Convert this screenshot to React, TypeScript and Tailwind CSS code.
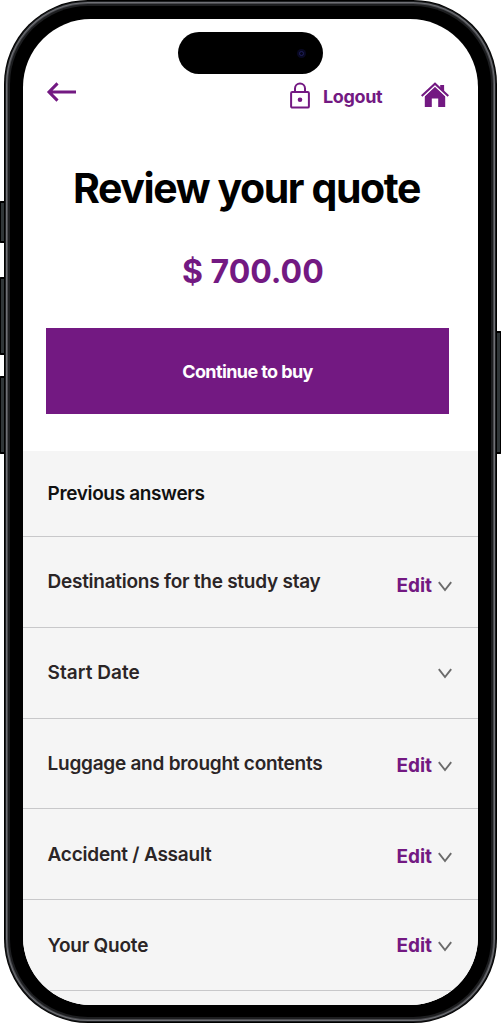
type Answer = {
  label: string;
  editable: boolean;
  labelStyle: string;
  actionStyle: string;
};

const answers: Answer[] = [
  { label: "Destinations for the study stay", editable: true, labelStyle: "pt-[32px] tracking-[-0.25px]", actionStyle: "pt-[36px]" },
  { label: "Start Date", editable: false, labelStyle: "pt-[32px] tracking-[0.05px]", actionStyle: "pt-[32px]" },
  { label: "Luggage and brought contents", editable: true, labelStyle: "pt-[32px] tracking-[-0.25px]", actionStyle: "pt-[34.6px]" },
  { label: "Accident / Assault", editable: true, labelStyle: "pt-[33px] tracking-[-0.22px]", actionStyle: "pt-[35px]" },
  { label: "Your Quote", editable: true, labelStyle: "pt-[33px] tracking-[-0.22px]", actionStyle: "pt-[33px]" },
];

function BackArrow() {
  return (
    <svg width="30" height="20" viewBox="0 0 30 20" fill="none" stroke="#731982" strokeWidth="3">
      <path d="M30 10H3M11.5 1.4L3 10l8.5 8.6" />
    </svg>
  );
}

function LockIcon() {
  return (
    <svg width="20" height="27" viewBox="0 0 20 27" fill="none" stroke="#731982" strokeWidth="2">
      <rect x="1.1" y="10" width="17.8" height="15.6" rx="1.2" />
      <path d="M5 10V6.5a5 5 0 0 1 10 0V10" />
      <circle cx="10" cy="17.7" r="2.3" fill="#731982" stroke="none" />
    </svg>
  );
}

function HomeIcon() {
  return (
    <svg width="28" height="26" viewBox="0 0 28 26" fill="#731982">
      <path d="M3.8 14L14 4.5 24.2 14v11h-7v-8.4h-6.4V25h-7z" />
      <path d="M.7 14.6L14 2l13.3 12.6" fill="none" stroke="#fff" strokeWidth="4" />
      <path d="M19.2 3h3.9v7l-3.9-3.7z" />
      <path d="M.7 14L14 1.7 27.3 14" fill="none" stroke="#731982" strokeWidth="2.1" />
    </svg>
  );
}

function Chevron() {
  return (
    <svg width="14" height="11" viewBox="0 0 14 11" fill="none" stroke="#6b6b6b" strokeWidth="1.9">
      <path d="M.8 1.2L7 9l6.2-7.8" />
    </svg>
  );
}

function SideButton({ className }: { className: string }) {
  return <div className={`absolute w-[5px] border-y-2 border-black bg-[#303638] ${className}`} />;
}

export default function App() {
  return (
    <div className="relative h-[1024px] w-[501px] overflow-hidden bg-white font-['Inter',sans-serif]">
      <SideButton className="left-0 top-[201px] h-[42px] border-l rounded-l-[1px]" />
      <SideButton className="left-0 top-[277px] h-[78px] border-l rounded-l-[1px]" />
      <SideButton className="left-0 top-[376px] h-[78px] border-l rounded-l-[1px]" />
      <SideButton className="right-0 top-[331px] h-[123px] border-r rounded-r-[1px]" />

      <div className="relative ml-[4px] h-[1023px] w-[493px] rounded-[84px] bg-black p-px">
        <div className="h-full rounded-[83px] bg-[#1d1f21] p-px">
          <div className="h-full rounded-[82px] bg-[#707176] p-px">
            <div className="h-full rounded-[81px] bg-[#4b4c50] p-px">
              <div className="h-full rounded-[80px] bg-[#1d1e20] p-[2px]">
                <div className="h-full rounded-[78px] bg-black px-[13px] pb-[12px] pt-[13px]">
                  <div className="relative flex h-full flex-col overflow-hidden rounded-[68px] bg-white">
                    <div className="absolute left-[155px] top-[13px] h-[42px] w-[145px] rounded-full bg-black">
                      <div className="absolute left-[119px] top-[17px] size-[9px] rounded-full bg-[#080822] p-[2px]">
                        <div className="size-[5px] rounded-full border border-[#20205a] bg-[#05051a]" />
                      </div>
                    </div>

                    <header className="flex h-[110px] shrink-0 items-start pl-[23px] pr-[29px]">
                      <button className="mt-[63px]" aria-label="Back"><BackArrow /></button>
                      <div className="ml-auto mt-[63px] flex items-start text-[#731982]">
                        <LockIcon />
                        <span className="ml-[13px] mt-[2px] w-[60px] whitespace-nowrap text-[18px] font-bold leading-[26px] tracking-[-0.35px]">Logout</span>
                        <button className="ml-[38px]" aria-label="Home"><HomeIcon /></button>
                      </div>
                    </header>

                    <section className="flex h-[322px] shrink-0 flex-col pl-[23px] pr-[29px]">
                      <h1 className="mt-[34px] whitespace-nowrap pl-[27px] text-[41px] font-bold leading-[50px] tracking-[-1.4px] text-black">Review your quote</h1>
                      <div className="mt-[39px] whitespace-nowrap pl-[136px] text-[32px] font-bold leading-[40px] text-[#731982]">$ 700.00</div>
                      <button className="mt-[36px] h-[86px] w-[403px] bg-[#731982] text-[18px] font-bold tracking-[-0.6px] text-white">Continue to buy</button>
                    </section>

                    <section className="grow bg-[#f5f5f5] text-[19px] font-semibold text-[#2b2526]">
                      <h2 className="h-[86px] border-b border-[#c8c8ca] pl-[24.5px] pt-[30px] leading-[26px] tracking-[-0.35px] text-[#111]">Previous answers</h2>
                      {answers.map((a) => (
                        <div key={a.label} className="flex h-[90.8px] justify-between border-b border-[#c8c8ca] pl-[24.5px] pr-[26px] leading-[26px]">
                          <span className={`whitespace-nowrap ${a.labelStyle}`}>{a.label}</span>
                          <button className={`flex items-start ${a.actionStyle}`}>
                            {a.editable && <span className="mr-[6px] font-bold text-[#731982]">Edit</span>}
                            <span className="mt-[8px]"><Chevron /></span>
                          </button>
                        </div>
                      ))}
                    </section>
                  </div>
                </div>
              </div>
            </div>
          </div>
        </div>
      </div>
    </div>
  );
}
